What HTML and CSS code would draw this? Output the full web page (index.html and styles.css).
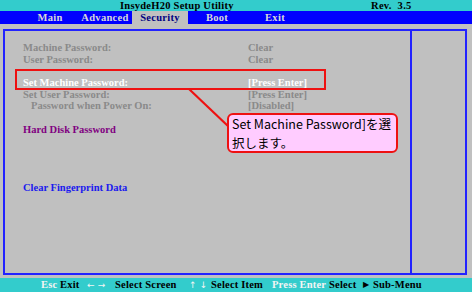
FILE: index.html
```html
<!DOCTYPE html>
<html lang="ja">
<head>
<meta charset="utf-8">
<title>InsydeH20 Setup Utility</title>
<link rel="stylesheet" href="styles.css">
</head>
<body>
<div class="screen">
  <header class="titlebar">
    <span class="title">InsydeH20 Setup Utility</span>
    <span class="rev">Rev.&nbsp;&nbsp;3.5</span>
  </header>
  <nav class="tabs">
    <span class="tab tab-main">Main</span>
    <span class="tab tab-adv">Advanced</span>
    <span class="tab tab-sec active">Security</span>
    <span class="tab tab-boot">Boot</span>
    <span class="tab tab-exit">Exit</span>
  </nav>
  <main class="panel">
    <section class="items">
      <div class="row dim"><span class="label">Machine Password:</span><span class="value">Clear</span></div>
      <div class="row dim"><span class="label">User Password:</span><span class="value">Clear</span></div>
      <div class="row"></div>
      <div class="row sel"><span class="label">Set Machine Password:</span><span class="value">[Press Enter]</span></div>
      <div class="row dim"><span class="label">Set User Password:</span><span class="value">[Press Enter]</span></div>
      <div class="row dim sub"><span class="label">Password when Power On:</span><span class="value">[Disabled]</span></div>
      <div class="row"></div>
      <div class="row menu"><span class="label">Hard Disk Password</span></div>
      <div class="row"></div>
      <div class="row"></div>
      <div class="row"></div>
      <div class="row"></div>
      <div class="row link"><span class="label">Clear Fingerprint Data</span></div>
    </section>
    <aside class="help"></aside>
  </main>
  <footer class="keys">
    <span class="k">Esc</span>
    <span class="d">Exit</span>
    <span class="k arrows">&larr; &rarr;</span>
    <span class="d">Select Screen</span>
    <span class="k arrows">&uarr; &darr;</span>
    <span class="d">Select Item</span>
    <span class="k">Press Enter</span>
    <span class="d">Select</span>
    <span class="d tri">&#9654;</span>
    <span class="d">Sub-Menu</span>
  </footer>

  <svg class="leader" width="472" height="292" viewBox="0 0 472 292" aria-hidden="true">
    <line x1="189" y1="89" x2="229" y2="127" stroke="#ee1111" stroke-width="2.2"/>
  </svg>
  <div class="callout">Set Machine Password]を選<br>択します。</div>
</div>
</body>
</html>
```
FILE: styles.css
```css
* { box-sizing: border-box; }
html, body { margin: 0; padding: 0; }
body {
  width: 472px;
  height: 292px;
  overflow: hidden;
  background: #c0c0c0;
  font-family: "Liberation Serif", "Times New Roman", serif;
  font-weight: bold;
  font-size: 10.5px;
}
.screen {
  position: relative;
  width: 472px;
  height: 292px;
  display: flex;
  flex-direction: column;
}

/* title bar */
.titlebar {
  height: 11px;
  background: #33cccc;
  color: #000;
  display: flex;
  align-items: center;
  padding-left: 120px;
  line-height: 11px;
}
.title { width: 251px; letter-spacing: 0.25px; }
.rev { letter-spacing: 0.3px; }

/* tabs */
.tabs {
  height: 13px;
  background: #0000ff;
  display: flex;
  padding-left: 22px;
  line-height: 13px;
}
.tab {
  color: #d8d8d8;
  text-align: center;
  letter-spacing: 0.3px;
}
.tab-main { width: 56px; }
.tab-adv { width: 54px; }
.tab-sec { width: 56px; }
.tab-boot { width: 58px; }
.tab-exit { width: 58px; }
.tab.active {
  background: #c0c0c0;
  color: #000080;
}

/* main panel */
.panel {
  margin: 5px 0 0 3px;
  width: 464px;
  height: 246px;
  border: 2px solid #2222ff;
  display: flex;
}
.items {
  flex: 1;
  border-right: 2px solid #2222ff;
  padding: 11.2px 0 0 18px;
}
.help { width: 53px; }

.row {
  position: relative;
  height: 11.67px;
  line-height: 11.67px;
  display: grid;
  grid-template-columns: 225px auto;
  white-space: nowrap;
}
.row.dim { color: #8a8a8a; }
.row.sub .label { padding-left: 8px; }
.row.sel { color: #ffffff; }
.row.sel::after {
  content: "";
  position: absolute;
  left: -8px;
  top: -8px;
  width: 307px;
  height: 17px;
  border: 2px solid #ee1111;
}
.row.menu { color: #800080; }
.row.link { color: #1a1aee; }

/* footer key legend */
.keys {
  margin-top: 3px;
  height: 14px;
  background: #33cccc;
  display: grid;
  grid-template-columns: 19px 27px 28px 74px 22px 61px 57px 34px 10px auto;
  padding-left: 41px;
  align-items: center;
  line-height: 14px;
  white-space: nowrap;
  letter-spacing: 0.2px;
}
.keys .k { color: #f4f4f4; }
.keys .d { color: #000; }
.keys .arrows {
  font-family: "DejaVu Sans", sans-serif;
  font-weight: normal;
  font-size: 9px;
}
.keys .tri {
  font-family: "DejaVu Sans", sans-serif;
  font-size: 8px;
}

/* annotation overlay */
.leader {
  position: absolute;
  left: 0;
  top: 0;
  pointer-events: none;
}
.callout {
  position: absolute;
  left: 227px;
  top: 113px;
  width: 171px;
  height: 40px;
  background: #ffccff;
  border: 2px solid #ee1111;
  border-radius: 6px;
  padding: 0 0 0 3px;
  font-family: "Noto Sans CJK JP", "Noto Sans", sans-serif;
  font-weight: normal;
  font-size: 12.5px;
  line-height: 18.5px;
  color: #000;
  white-space: nowrap;
}
```
